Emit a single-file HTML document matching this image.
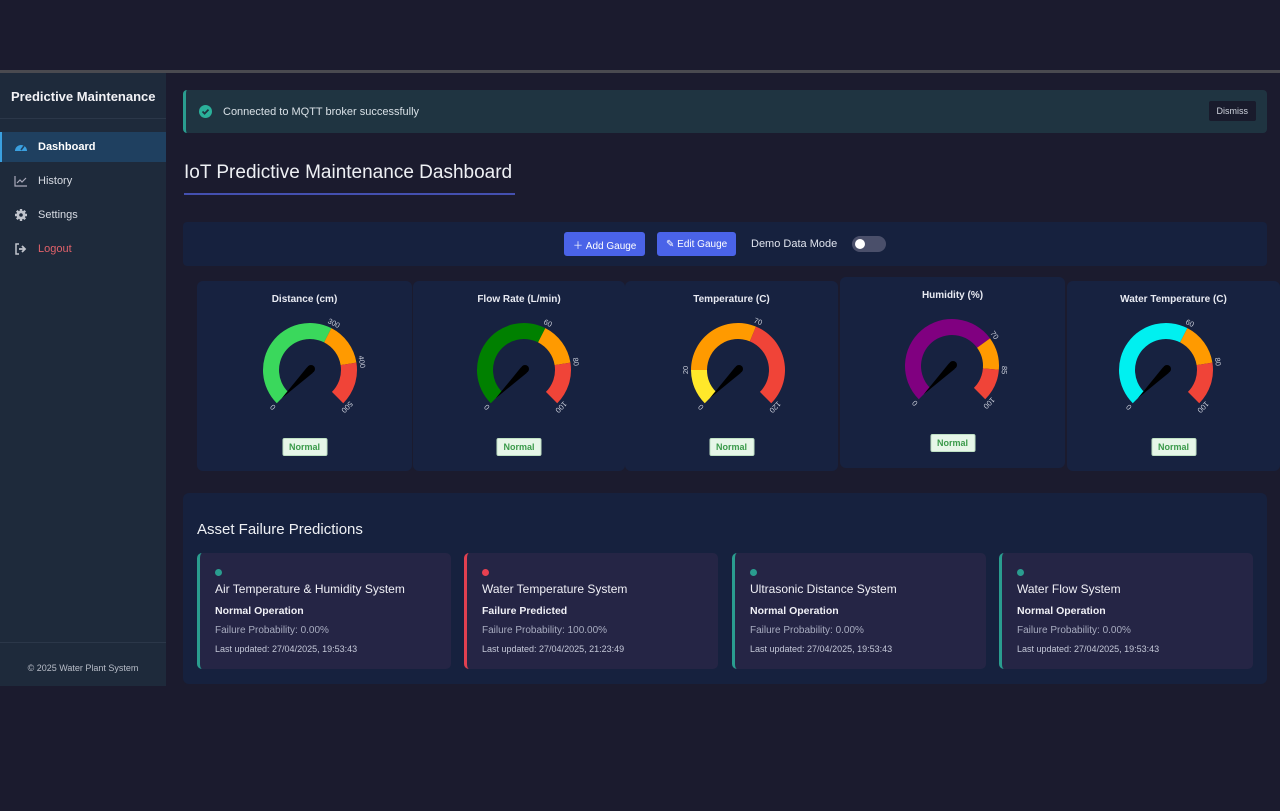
<!DOCTYPE html>
<html><head><meta charset="utf-8">
<style>
*{box-sizing:border-box;margin:0;padding:0}
body{width:1280px;height:811px;background:#1b1b2e;font-family:"Liberation Sans",sans-serif;color:#e6e6ee;position:relative;overflow:hidden}
.topline{position:absolute;left:0;top:70px;width:1280px;height:3px;background:#4a4a50}
.side{position:absolute;left:0;top:73px;width:166px;height:613px;background:#1e2a3b}
.side h1{font-size:13px;font-weight:bold;color:#f2f2f6;padding:16px 0 0 11px;height:46px;border-bottom:1px solid #2b3749}
.nav{margin-top:13px}
.nav div{height:30px;margin-bottom:4px;display:flex;align-items:center;padding-left:14px;font-size:11px;color:#d8dce4}
.nav div svg{margin-right:10px}
.nav .act{background:#1f4060;font-weight:bold;color:#fff;border-left:2px solid #3aa0e0;padding-left:12px}
.nav .lo{color:#e0616a}
.foot{position:absolute;left:0;bottom:0;width:166px;height:44px;border-top:1px solid #2b3749;font-size:9px;color:#b8bdc8;text-align:center;padding-top:20px}
.alert{position:absolute;left:183px;top:90px;width:1084px;height:43px;background:#1f3441;border-left:3px solid #2a9d8f;border-radius:4px;display:flex;align-items:center;font-size:11px;color:#d8e0e6}
.alert .ok{width:13px;height:13px;border-radius:50%;background:#2bb09a;margin:0 11px 0 13px;position:relative}
.dismiss{position:absolute;right:11px;top:11px;background:#191b2c;color:#d0d4de;font-size:9px;padding:5px 8px;border-radius:2px}
.title{position:absolute;left:184px;top:162px;font-size:19px;color:#eef0f4;padding-bottom:9px;border-bottom:2px solid #4450b0;width:331px}
.tool{position:absolute;left:183px;top:222px;width:1084px;height:44px;background:#16213e;border-radius:4px}
.btn{position:absolute;top:10px;height:24px;background:#4a63e8;color:#fff;font-size:10px;border-radius:3px;display:flex;align-items:center;padding:0 9px}
.demo{position:absolute;left:568px;top:16px;font-size:11px;color:#e0e4ee}
.tog{position:absolute;left:669px;top:14px;width:34px;height:16px;border-radius:8px;background:#4a4f6a}
.tog:after{content:"";position:absolute;left:3px;top:3px;width:10px;height:10px;border-radius:50%;background:#fff}
.g{position:absolute;background:#172240;border-radius:6px}
.gt{position:absolute;width:100%;text-align:center;font-size:10px;font-weight:bold;color:#e8eaf2}
.badge{position:absolute;left:50%;transform:translateX(-50%);background:#e6f6e8;color:#3a9a4a;font-size:9px;font-weight:bold;padding:3px 6px;border-radius:2px;border:1px solid #bfe0c4}
.pred{position:absolute;left:183px;top:493px;width:1084px;height:191px;background:#16213e;border-radius:6px}
.pred h2{position:absolute;left:14px;top:28px;font-size:15px;font-weight:normal;color:#eef0f4}
.pc{position:absolute;top:60px;width:254px;height:116px;background:#252545;border-radius:5px;border-left:3px solid #2a9d8f;padding:16px 0 0 15px}
.pc.r{border-left-color:#e04050}
.dot{width:7px;height:7px;border-radius:50%;background:#2a9d8f}
.pc.r .dot{background:#e84050}
.pc .n{font-size:12px;color:#f0f0f6;margin-top:6px}
.pc .s{font-size:10.5px;font-weight:bold;color:#f0f0f6;margin-top:9px}
.pc .p{font-size:10px;color:#a8acc0;margin-top:8px}
.pc .u{font-size:9px;color:#c4c8d8;margin-top:8px}
</style></head><body>
<div class="topline"></div>
<div class="side">
<h1>Predictive Maintenance</h1>
<div class="nav">
<div class="act"><svg width="14" height="12" viewBox="0 0 14 12"><path d="M1 10A6 6 0 1 1 13 10Z" fill="#3aa0e0"/><path d="M7 9L10 5" stroke="#1f4060" stroke-width="1.6"/></svg>Dashboard</div>
<div><svg width="14" height="12" viewBox="0 0 14 12"><path d="M1 1V11H13M3 8L6 5L8 7L12 3" stroke="#aab" fill="none" stroke-width="1.2"/></svg>History</div>
<div><svg width="14" height="14" viewBox="0 0 14 14"><circle cx="7" cy="7" r="4.5" fill="#c0c4cc"/><path d="M7 1V13M1 7H13M2.8 2.8L11.2 11.2M11.2 2.8L2.8 11.2" stroke="#c0c4cc" stroke-width="2.4"/><circle cx="7" cy="7" r="1.8" fill="#1e2a3b"/></svg>Settings</div>
<div class="lo"><svg width="14" height="12" viewBox="0 0 14 12"><path d="M5 1H2V11H5" stroke="#c0c4cc" fill="none" stroke-width="1.5"/><path d="M5 6H10M8 3L11 6L8 9" stroke="#c0c4cc" fill="none" stroke-width="1.8"/></svg>Logout</div>
</div>
<div class="foot">© 2025 Water Plant System</div>
</div>
<div class="alert"><div class="ok"><svg width="13" height="13" viewBox="0 0 13 13" style="position:absolute;left:0;top:0"><path d="M3.5 6.5L5.6 8.6L9.5 4.6" stroke="#1f3441" stroke-width="1.8" fill="none"/></svg></div>Connected to MQTT broker successfully<div class="dismiss">Dismiss</div></div>
<div class="title">IoT Predictive Maintenance Dashboard</div>
<div class="tool">
<div class="btn" style="left:381px">＋&nbsp;Add Gauge</div>
<div class="btn" style="left:474px">✎&nbsp;Edit Gauge</div>
<div class="demo">Demo Data Mode</div>
<div class="tog"></div>
</div>
<div id="gauges"></div>
<div class="pred"><h2>Asset Failure Predictions</h2>
<div class="pc" style="left:14px"><div class="dot"></div><div class="n">Air Temperature &amp; Humidity System</div><div class="s">Normal Operation</div><div class="p">Failure Probability: 0.00%</div><div class="u">Last updated: 27/04/2025, 19:53:43</div></div>
<div class="pc r" style="left:281px"><div class="dot"></div><div class="n">Water Temperature System</div><div class="s">Failure Predicted</div><div class="p">Failure Probability: 100.00%</div><div class="u">Last updated: 27/04/2025, 21:23:49</div></div>
<div class="pc" style="left:549px"><div class="dot"></div><div class="n">Ultrasonic Distance System</div><div class="s">Normal Operation</div><div class="p">Failure Probability: 0.00%</div><div class="u">Last updated: 27/04/2025, 19:53:43</div></div>
<div class="pc" style="left:816px"><div class="dot"></div><div class="n">Water Flow System</div><div class="s">Normal Operation</div><div class="p">Failure Probability: 0.00%</div><div class="u">Last updated: 27/04/2025, 19:53:43</div></div>
</div>
<script>
var G=[
 {x:197,y:281,w:215,h:190,t:"Distance (cm)",max:500,seg:[[0,300,"#3ad85c"],[300,400,"#ff9a00"],[400,500,"#f04438"]],lab:[0,300,400,500]},
 {x:413,y:281,w:212,h:190,t:"Flow Rate (L/min)",max:100,seg:[[0,60,"#008000"],[60,80,"#ff9a00"],[80,100,"#f04438"]],lab:[0,60,80,100]},
 {x:625,y:281,w:213,h:190,t:"Temperature (C)",max:120,seg:[[0,20,"#ffe82a"],[20,70,"#ff9a00"],[70,120,"#f04438"]],lab:[0,20,70,120]},
 {x:840,y:277,w:225,h:191,t:"Humidity (%)",max:100,seg:[[0,70,"#800080"],[70,85,"#ff9a00"],[85,100,"#f04438"]],lab:[0,70,85,100]},
 {x:1067,y:281,w:213,h:190,t:"Water Temperature (C)",max:100,seg:[[0,60,"#00f0f0"],[60,80,"#ff9a00"],[80,100,"#f04438"]],lab:[0,60,80,100]}
];
var cx=[310,524,738,952,1166];
var h="";
function pt(c,y,r,a){var rad=a*Math.PI/180;return [c+r*Math.cos(rad),y-r*Math.sin(rad)];}
G.forEach(function(g,i){
 var c=cx[i]-g.x, cy=89;
 var s='<svg width="'+g.w+'" height="'+g.h+'" style="position:absolute;left:0;top:0">';
 var R=47,r=31;
 g.seg.forEach(function(sg){
  var a0=225-270*sg[0]/g.max,a1=225-270*sg[1]/g.max;
  var p1=pt(c,cy,R,a0),p2=pt(c,cy,R,a1),p3=pt(c,cy,r,a1),p4=pt(c,cy,r,a0);
  var lg=(a0-a1)>180?1:0;
  s+='<path d="M'+p1+' A'+R+' '+R+' 0 '+lg+' 1 '+p2+' L'+p3+' A'+r+' '+r+' 0 '+lg+' 0 '+p4+'Z" fill="'+sg[2]+'"/>';
 });
 g.lab.forEach(function(v){
  var a=225-270*v/g.max,p=pt(c,cy,R+3,a);
  s+='<text x="'+p[0]+'" y="'+p[1]+'" font-size="7.5" fill="#c8ccd8" text-anchor="middle" transform="rotate('+(90-a)+' '+p[0]+' '+p[1]+')">'+v+'</text>';
 });
 var tip=pt(c,cy,40,225);
 s+='<path d="M'+pt(c,cy,4,135)+' L'+tip+' L'+pt(c,cy,4,-45)+'Z" fill="#000"/><circle cx="'+(c+1)+'" cy="'+(cy-1)+'" r="4" fill="#000"/>';
 s+='</svg>';
 h+='<div class="g" style="left:'+g.x+'px;top:'+g.y+'px;width:'+g.w+'px;height:'+g.h+'px">'+s+'<div class="gt" style="top:13px">'+g.t+'</div><div class="badge" style="top:157px">Normal</div></div>';
});
document.getElementById("gauges").innerHTML=h;
</script>
</body></html>
